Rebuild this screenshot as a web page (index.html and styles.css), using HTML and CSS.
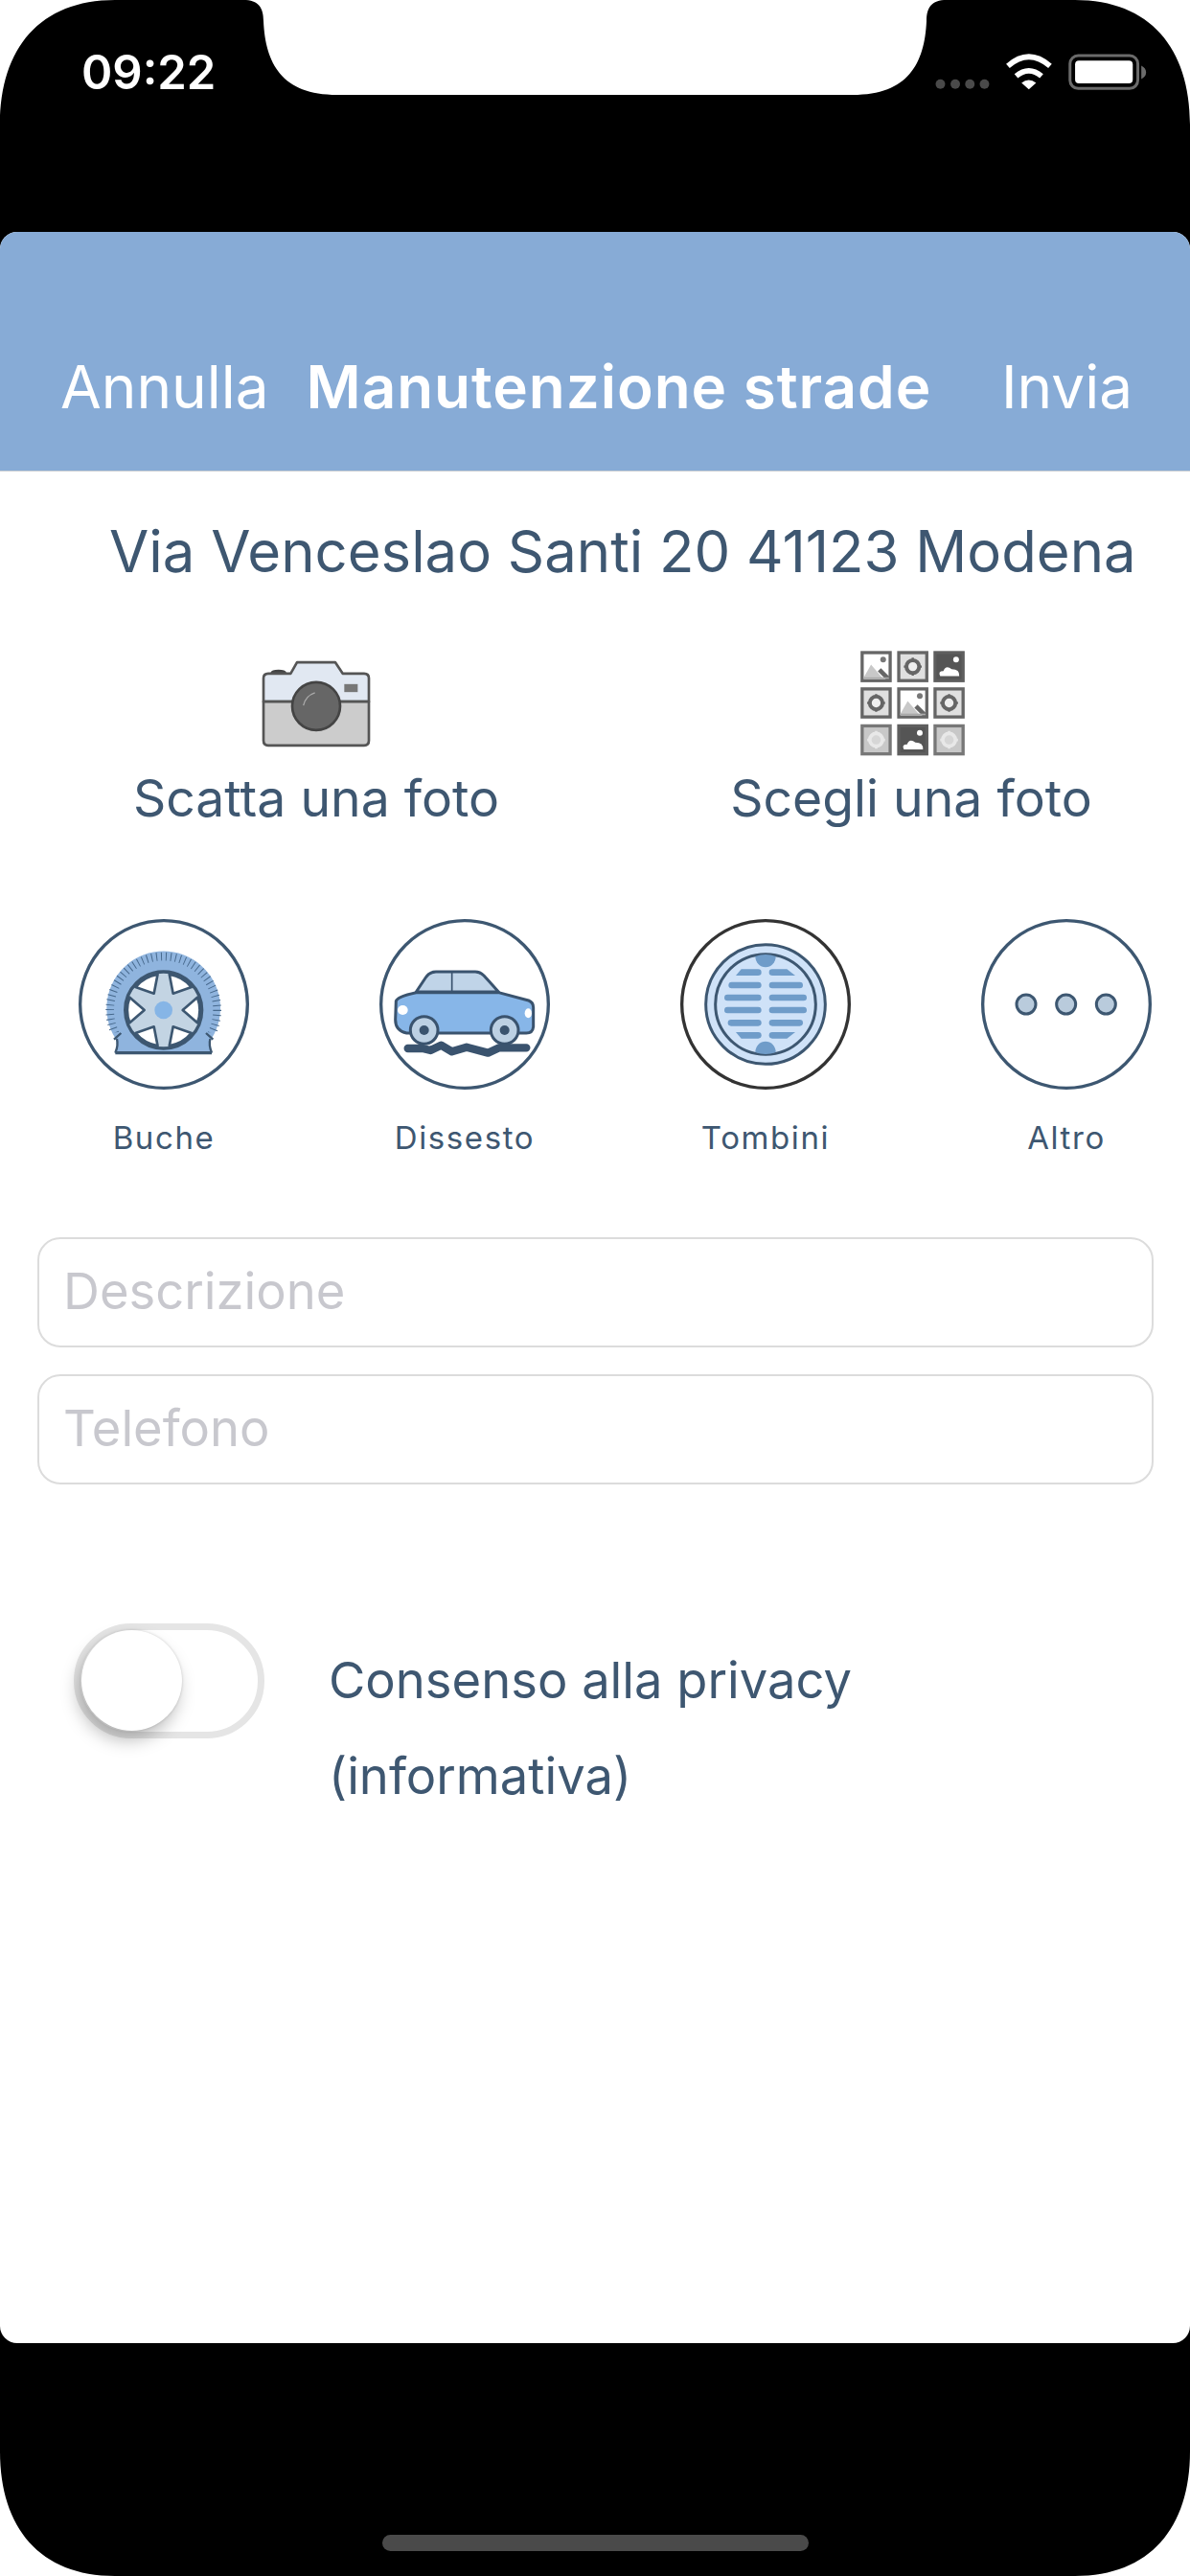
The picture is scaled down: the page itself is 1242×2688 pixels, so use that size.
FILE: index.html
```html
<!DOCTYPE html>
<html lang="it">
<head>
<meta charset="utf-8">
<title>Manutenzione strade</title>
<link rel="stylesheet" href="styles.css">
</head>
<body>
<div class="phone">
  <svg class="device" viewBox="0 0 1242 2688" width="1242" height="2688" aria-hidden="true">
    <path d="M120 0H254C270 0 275 8 275 22C277 66 294 99 352 99H890C948 99 965 66 967 22C967 8 972 0 988 0H1122C1200 0 1242 50 1242 130V2558C1242 2638 1200 2688 1122 2688H120C42 2688 0 2638 0 2558V130C0 50 42 0 120 0Z" fill="#000"/>
  </svg>

  <div class="status">
    <span class="time">09:22</span>
    <svg class="status-icons" viewBox="30 100 690 130" width="230" height="43" aria-hidden="true">
      <g fill="#4a4a4a">
        <circle cx="56" cy="205" r="15"/><circle cx="103" cy="205" r="15"/><circle cx="149" cy="205" r="15"/><circle cx="195" cy="205" r="15"/>
      </g>
      <g fill="none" stroke="#fff" stroke-width="17">
        <path d="M269 148Q335 90 402 148"/>
        <path d="M295 180Q335 146 375 180"/>
      </g>
      <path d="M335 222L312 201Q335 184 358 201Z" fill="#fff"/>
      <rect x="465" y="115" width="214" height="104" rx="26" fill="none" stroke="#6b6b6b" stroke-width="9"/>
      <rect x="481" y="131" width="182" height="72" rx="12" fill="#fff"/>
      <path d="M690 147Q705 155 705 168Q705 181 690 189Z" fill="#6b6b6b"/>
    </svg>
  </div>

  <main class="sheet">
    <header class="nav">
      <span class="nav-action">Annulla</span>
      <span class="nav-title">Manutenzione strade</span>
      <span class="nav-action nav-send">Invia</span>
    </header>

    <p class="address">Via Venceslao Santi 20 41123 Modena</p>

    <section class="media">
      <div class="media-item">
        <div class="media-icon">
          <svg viewBox="150 80 360 290" width="120" height="97" aria-hidden="true">
            <path d="M190 128Q192 121 212 121Q232 121 234 128Z" fill="#444" stroke="#444" stroke-width="6"/>
            <path d="M180 130H250L270 95H390L413 130H480Q495 130 495 145V218H165V145Q165 130 180 130Z" fill="#e1e8f2" stroke="#555" stroke-width="8" stroke-linejoin="round"/>
            <path d="M165 218H495V340Q495 355 480 355H180Q165 355 165 340Z" fill="#ccc" stroke="#555" stroke-width="8" stroke-linejoin="round"/>
            <circle cx="330" cy="232" r="75" fill="#666" stroke="#444" stroke-width="8"/>
            <rect x="418" y="163" width="42" height="25" fill="#777"/>
            <path d="M290 230Q296 200 326 190" fill="none" stroke="#aaa" stroke-width="4"/>
          </svg>
        </div>
        <span class="media-label">Scatta una foto</span>
      </div>
      <div class="media-item">
        <div class="media-icon">
          <svg class="grid-icon" viewBox="75 50 345 340" width="115" height="113" aria-hidden="true">
            <defs>
              <g id="tile-photo">
                <rect x="4" y="4" width="88" height="88" fill="#fff" stroke="#666" stroke-width="10"/>
                <path d="M8 84L32 42L68 84Z" fill="#c8c8c8"/>
                <circle cx="70" cy="26" r="9" fill="#777"/>
                <path d="M58 58L88 88" stroke="#666" stroke-width="14"/>
                <path d="M8 84H88" stroke="#aaa" stroke-width="5"/>
              </g>
              <g id="tile-gear">
                <rect x="4" y="4" width="88" height="88" fill="#e0e0e0" stroke="#666" stroke-width="10"/>
                <path d="M48 20V76M20 48H76" stroke="#666" stroke-width="7"/>
                <circle cx="48" cy="48" r="20" fill="#eee" stroke="#666" stroke-width="12"/>
              </g>
              <g id="tile-cloud">
                <rect x="4" y="4" width="88" height="88" fill="#555" stroke="#5e5e5e" stroke-width="10"/>
                <circle cx="70" cy="26" r="9" fill="#fff"/>
                <path d="M20 78Q12 62 30 62Q38 42 56 56Q82 56 80 78Z" fill="#fff"/>
              </g>
              <g id="tile-soft">
                <rect x="4" y="4" width="88" height="88" fill="#c8c8c8" stroke="#777" stroke-width="10"/>
                <path d="M48 20V76M20 48H76" stroke="#e8e8e8" stroke-width="8"/>
                <circle cx="48" cy="48" r="20" fill="#d6d6d6" stroke="#e8e8e8" stroke-width="11"/>
              </g>
            </defs>
            <use href="#tile-photo" x="85" y="58"/>
            <use href="#tile-gear" x="200" y="58"/>
            <use href="#tile-cloud" x="314" y="58"/>
            <use href="#tile-gear" x="85" y="172"/>
            <use href="#tile-photo" x="200" y="172"/>
            <use href="#tile-gear" x="314" y="172"/>
            <use href="#tile-soft" x="85" y="288"/>
            <use href="#tile-cloud" x="200" y="288"/>
            <use href="#tile-soft" x="314" y="288"/>
          </svg>
        </div>
        <span class="media-label">Scegli una foto</span>
      </div>
    </section>

    <section class="categories">
      <div class="category">
        <svg viewBox="64 52 540 540" width="180" height="180" aria-hidden="true">
          <circle cx="334" cy="322" r="262" fill="#fff" stroke="#3d5771" stroke-width="10"/>
          <clipPath id="tire-top"><rect x="130" y="140" width="410" height="270"/></clipPath>
          <path d="M182 474Q192 450 182 428A178 178 0 1 1 484 428Q474 450 484 474Z" fill="#8fb4de"/>
          <circle cx="333" cy="340" r="168" fill="none" stroke="#46688c" stroke-width="26" stroke-dasharray="3 12.4" pathLength="1080" clip-path="url(#tire-top)"/>
          <path d="M182 474H484" stroke="#3d5771" stroke-width="10"/>
          <path d="M182 474Q192 450 187 430M484 474Q474 450 479 430" fill="none" stroke="#3d5771" stroke-width="7"/>
          <path d="M178 432L200 412M488 432L466 412" fill="none" stroke="#3d5771" stroke-width="7"/>
          <g transform="translate(333 340)">
            <circle r="120" fill="#c3d4e3" stroke="#3d5771" stroke-width="10"/>
            <defs><path id="wheel-window" d="M60 0L106 -40A114 114 0 0 1 106 40Z" fill="#fff" stroke="#3d5771" stroke-width="8" stroke-linejoin="round"/></defs>
            <use href="#wheel-window"/>
            <use href="#wheel-window" transform="rotate(60)"/>
            <use href="#wheel-window" transform="rotate(120)"/>
            <use href="#wheel-window" transform="rotate(180)"/>
            <use href="#wheel-window" transform="rotate(240)"/>
            <use href="#wheel-window" transform="rotate(300)"/>
            <circle r="28" fill="#86b5e6"/>
          </g>
        </svg>
        <span class="category-label">Buche</span>
      </div>
      <div class="category">
        <svg viewBox="42 52 540 540" width="180" height="180" aria-hidden="true">
          <circle cx="312" cy="322" r="262" fill="#fff" stroke="#3d5771" stroke-width="10"/>
          <path d="M160 283L190 238Q202 220 222 220H345Q360 220 372 232L418 283Z" fill="#c0d4e8" stroke="#3a536e" stroke-width="9" stroke-linejoin="round"/>
          <path d="M272 220V283" stroke="#3a536e" stroke-width="5"/>
          <path d="M97 312Q100 298 160 285H418L512 310Q527 316 527 332V392Q525 412 505 412H130Q95 405 95 370Z" fill="#87b6e8" stroke="#3a536e" stroke-width="9" stroke-linejoin="round"/>
          <ellipse cx="118" cy="340" rx="16" ry="15" fill="#fff"/>
          <ellipse cx="511" cy="350" rx="11" ry="15" fill="#fff"/>
          <circle cx="185" cy="403" r="43" fill="#bcd0e3" stroke="#3a536e" stroke-width="9"/>
          <circle cx="185" cy="403" r="15" fill="#3a536e"/>
          <circle cx="437" cy="403" r="43" fill="#bcd0e3" stroke="#3a536e" stroke-width="9"/>
          <circle cx="437" cy="403" r="15" fill="#3a536e"/>
          <path d="M134 460H180L205 466L238 450L272 470L318 456L385 474L420 458H505" fill="none" stroke="#3a536e" stroke-width="25" stroke-linejoin="round" stroke-linecap="round"/>
        </svg>
        <span class="category-label">Dissesto</span>
      </div>
      <div class="category">
        <svg viewBox="51 52 540 540" width="180" height="180" aria-hidden="true">
          <circle cx="321" cy="322" r="262" fill="#fff" stroke="#333" stroke-width="10"/>
          <circle cx="321" cy="322" r="187" fill="#cfe2f8" stroke="#3d5771" stroke-width="9"/>
          <circle cx="321" cy="322" r="157" fill="#cfe2f8" stroke="#3d5771" stroke-width="9"/>
          <g fill="#6f9cc9">
            <path d="M289 172A32 34 0 0 0 353 172Q321 160 289 172Z"/>
            <path d="M289 472A32 34 0 0 1 353 472Q321 484 289 472Z"/>
            <path d="M228 232L245 212H298Q308 212 308 222T298 232Z"/>
            <path d="M414 232L388 212H342Q332 212 332 222T342 232Z"/>
            <rect x="205" y="252" width="103" height="20" rx="10"/>
            <rect x="332" y="252" width="106" height="20" rx="10"/>
            <rect x="192" y="291" width="116" height="20" rx="10"/>
            <rect x="332" y="291" width="118" height="20" rx="10"/>
            <rect x="192" y="330" width="116" height="20" rx="10"/>
            <rect x="332" y="330" width="118" height="20" rx="10"/>
            <rect x="203" y="370" width="105" height="20" rx="10"/>
            <rect x="332" y="370" width="106" height="20" rx="10"/>
            <path d="M228 409L245 429H298Q308 429 308 419T298 409Z"/>
            <path d="M414 409L388 429H342Q332 429 332 419T342 409Z"/>
          </g>
        </svg>
        <span class="category-label">Tombini</span>
      </div>
      <div class="category">
        <svg viewBox="61 52 540 540" width="180" height="180" aria-hidden="true">
          <circle cx="331" cy="322" r="262" fill="#fff" stroke="#3d5771" stroke-width="10"/>
          <g fill="#b9cbdc" stroke="#3d5771" stroke-width="9">
            <circle cx="205" cy="322" r="30"/>
            <circle cx="330" cy="322" r="30"/>
            <circle cx="455" cy="322" r="30"/>
          </g>
        </svg>
        <span class="category-label">Altro</span>
      </div>
    </section>

    <section class="fields">
      <div class="field">Descrizione</div>
      <div class="field">Telefono</div>
    </section>

    <section class="consent">
      <div class="toggle"><span class="knob"></span></div>
      <p class="consent-text">Consenso alla privacy (informativa)</p>
    </section>
  </main>

  <footer class="home"><span class="home-bar"></span></footer>
</div>
</body>
</html>
```

FILE: styles.css
```css
* { box-sizing: border-box; }
html, body { margin: 0; padding: 0; background: #fff; }
body { width: 1242px; height: 2688px; overflow: hidden; font-family: Inter, "Liberation Sans", sans-serif; color: #3e5771; }

.phone { position: relative; width: 1242px; height: 2688px; display: flex; flex-direction: column; }
.device { position: absolute; inset: 0; }

.status { position: relative; height: 242px; flex: none; display: flex; justify-content: space-between; align-items: flex-start; padding: 0 40px 0 85px; }
.time { margin-top: 48px; font-size: 49px; line-height: 56px; font-weight: 600; color: #fff; }
.status-icons { margin-top: 53px; }

.sheet { position: relative; height: 2203px; flex: none; background: #fff; border-radius: 18px; overflow: hidden; }

.nav { height: 250px; background: #87abd6; border-bottom: 1px solid #c8ccd2; display: flex; padding: 124px 60px 0 63px; color: #fff; font-size: 62px; line-height: 76px; align-items: flex-start; white-space: nowrap; }
.nav-action { font-weight: 400; }
.nav-title { margin-left: 39px; font-weight: 600; letter-spacing: 0.95px; }
.nav-send { margin-left: auto; }

.address { margin: 0; height: 167px; padding-left: 114px; font-size: 59.8px; line-height: 167px; white-space: nowrap; }

.media { display: grid; grid-template-columns: 460px 460px; column-gap: 161px; padding: 15px 0 0 100px; }
.media-item { display: flex; flex-direction: column; align-items: center; }
.media-icon { height: 120px; display: flex; align-items: center; justify-content: center; }
.grid-icon { margin-left: 3px; margin-top: -1px; }
.media-label { font-size: 53.5px; line-height: 76px; white-space: nowrap; padding-top: 1px; }

.categories { display: flex; gap: 134px; margin-top: 87px; padding-left: 81px; }
.category { width: 180px; display: flex; flex-direction: column; align-items: center; }
.category svg { display: block; }
.category-label { margin-top: 29px; font-size: 33px; line-height: 40px; letter-spacing: 1.6px; white-space: nowrap; }

.fields { display: flex; flex-direction: column; gap: 28px; margin: 84px 38px 0 39px; }
.field { height: 115px; border: 2px solid #dcdcdc; border-radius: 24px; padding-left: 25px; font-size: 52.5px; line-height: 109px; color: #c8c8ce; }

.consent { display: flex; align-items: flex-start; gap: 67px; margin-top: 145px; padding-left: 77px; }
.toggle { width: 199px; height: 120px; flex: none; border: 7px solid #e5e5e5; border-radius: 60px; padding-left: 1px; }
.knob { display: block; width: 105px; height: 105px; border-radius: 50%; background: #fff; box-shadow: -4px 10px 18px rgba(0,0,0,.26), 0 0 3px rgba(0,0,0,.18); }
.consent-text { margin: 9px 0 0; width: 620px; font-size: 52.5px; line-height: 100px; }

.home { position: relative; flex: 1; display: flex; justify-content: center; padding-top: 200px; }
.home-bar { width: 445px; height: 17px; background: #4a4a4a; border-radius: 9px; }
```
